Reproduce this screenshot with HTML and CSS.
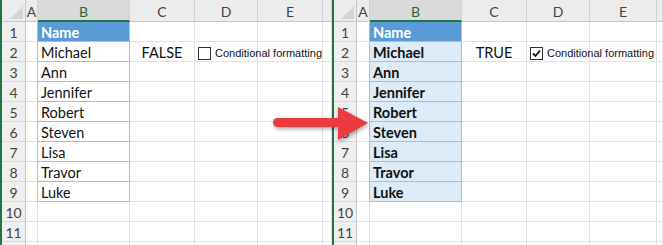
FILE: index.html
```html
<!DOCTYPE html>
<html lang="en">
<head>
    <meta charset="UTF-8">
    <title>Conditional formatting</title>
    <link rel="stylesheet" href="styles.css">
</head>
<body>

    <div class="panel">
        <div class="sheet">
            <div class="corner"></div><div class="ch">A</div><div class="ch sel">B</div><div class="ch">C</div><div class="ch">D</div><div class="ch">E</div><div class="ch"></div>
            <div class="rh">1</div><div class="c pre"></div><div class="c n nh">Name</div><div class="c"></div><div class="c"></div><div class="c"></div><div class="c"></div>
            <div class="rh">2</div><div class="c pre"></div><div class="c n">Michael</div><div class="c mid">FALSE</div><div class="c"></div><div class="c"></div><div class="c"></div>
            <div class="rh">3</div><div class="c pre"></div><div class="c n">Ann</div><div class="c"></div><div class="c"></div><div class="c"></div><div class="c"></div>
            <div class="rh">4</div><div class="c pre"></div><div class="c n">Jennifer</div><div class="c"></div><div class="c"></div><div class="c"></div><div class="c"></div>
            <div class="rh">5</div><div class="c pre"></div><div class="c n">Robert</div><div class="c"></div><div class="c"></div><div class="c"></div><div class="c"></div>
            <div class="rh">6</div><div class="c pre"></div><div class="c n">Steven</div><div class="c"></div><div class="c"></div><div class="c"></div><div class="c"></div>
            <div class="rh">7</div><div class="c pre"></div><div class="c n">Lisa</div><div class="c"></div><div class="c"></div><div class="c"></div><div class="c"></div>
            <div class="rh">8</div><div class="c pre"></div><div class="c n">Travor</div><div class="c"></div><div class="c"></div><div class="c"></div><div class="c"></div>
            <div class="rh">9</div><div class="c pre"></div><div class="c n">Luke</div><div class="c"></div><div class="c"></div><div class="c"></div><div class="c"></div>
            <div class="rh">10</div><div class="c"></div><div class="c"></div><div class="c"></div><div class="c"></div><div class="c"></div><div class="c"></div>
            <div class="rh">11</div><div class="c"></div><div class="c"></div><div class="c"></div><div class="c"></div><div class="c"></div><div class="c"></div>
            <div class="rh"></div><div class="c"></div><div class="c"></div><div class="c"></div><div class="c"></div><div class="c"></div><div class="c"></div>
        </div>
        <label class="check"><span class="box"></span>Conditional formatting</label>
    </div>

    <div class="panel right">
        <div class="sheet">
            <div class="corner"></div><div class="ch">A</div><div class="ch sel">B</div><div class="ch">C</div><div class="ch">D</div><div class="ch">E</div><div class="ch"></div>
            <div class="rh">1</div><div class="c pre"></div><div class="c n nh">Name</div><div class="c"></div><div class="c"></div><div class="c"></div><div class="c"></div>
            <div class="rh">2</div><div class="c pre"></div><div class="c n on">Michael</div><div class="c mid">TRUE</div><div class="c"></div><div class="c"></div><div class="c"></div>
            <div class="rh">3</div><div class="c pre"></div><div class="c n on">Ann</div><div class="c"></div><div class="c"></div><div class="c"></div><div class="c"></div>
            <div class="rh">4</div><div class="c pre"></div><div class="c n on">Jennifer</div><div class="c"></div><div class="c"></div><div class="c"></div><div class="c"></div>
            <div class="rh">5</div><div class="c pre"></div><div class="c n on">Robert</div><div class="c"></div><div class="c"></div><div class="c"></div><div class="c"></div>
            <div class="rh">6</div><div class="c pre"></div><div class="c n on">Steven</div><div class="c"></div><div class="c"></div><div class="c"></div><div class="c"></div>
            <div class="rh">7</div><div class="c pre"></div><div class="c n on">Lisa</div><div class="c"></div><div class="c"></div><div class="c"></div><div class="c"></div>
            <div class="rh">8</div><div class="c pre"></div><div class="c n on">Travor</div><div class="c"></div><div class="c"></div><div class="c"></div><div class="c"></div>
            <div class="rh">9</div><div class="c pre"></div><div class="c n on">Luke</div><div class="c"></div><div class="c"></div><div class="c"></div><div class="c"></div>
            <div class="rh">10</div><div class="c"></div><div class="c"></div><div class="c"></div><div class="c"></div><div class="c"></div><div class="c"></div>
            <div class="rh">11</div><div class="c"></div><div class="c"></div><div class="c"></div><div class="c"></div><div class="c"></div><div class="c"></div>
            <div class="rh"></div><div class="c"></div><div class="c"></div><div class="c"></div><div class="c"></div><div class="c"></div><div class="c"></div>
        </div>
        <label class="check"><span class="box"><svg viewBox="0 0 11 11" width="11" height="11"><path d="M2 5.5 L4.5 8 L9 2.5" fill="none" stroke="#111" stroke-width="1.8"/></svg></span>Conditional formatting</label>
    </div>

    <svg class="arrow" width="110" height="50" viewBox="0 0 110 50">
        <rect x="8" y="18" width="70" height="9" rx="4.5" fill="#eb3b3f"/>
        <polygon points="73,7 103,23 73,40" fill="#eb3b3f"/>
    </svg>

</body>
</html>
```

FILE: styles.css
```css
* {
    margin: 0;
    padding: 0;
    box-sizing: border-box;
}
body {
    display: flex;
    width: 663px;
    height: 245px;
    overflow: hidden;
    background: white;
    font-family: Lato, "Liberation Sans", sans-serif;
    font-size: 14.5px;
    color: #111;
    position: relative;
}
.panel {
    position: relative;
    width: 332px;
    border-left: 2px solid #217346;
    overflow: hidden;
}
.panel.right {
    width: 331px;
}
.sheet {
    display: grid;
    grid-template-columns: 24px 12px 92px 65px 63px 65px 1fr;
    grid-template-rows: 22px repeat(12, 20px);
}
.right .sheet {
    grid-template-columns: 23px 13px 92px 65px 63px 67px 1fr;
}
.corner {
    background: #ececec;
    border-right: 1px solid #c6c6c6;
    border-bottom: 1px solid #c6c6c6;
    position: relative;
}
.corner::after {
    content: "";
    position: absolute;
    right: 2px;
    bottom: 2px;
    border-left: 13px solid transparent;
    border-bottom: 13px solid #d4d4d4;
}
.ch {
    background: #ececec;
    border-right: 1px solid #d2d2d2;
    border-bottom: 1px solid #c6c6c6;
    color: #444;
    font-size: 14px;
    text-align: center;
    line-height: 24px;
    overflow: hidden;
}
.ch.sel {
    background: #dadada;
    color: #1f6b41;
    border-bottom: 2px solid #217346;
}
.rh {
    background: #efefef;
    border-right: 1px solid #c6c6c6;
    border-bottom: 1px solid #dadada;
    color: #444;
    font-size: 14px;
    text-align: center;
    line-height: 22px;
    overflow: hidden;
}
.c {
    border-right: 1px solid #e1e1e1;
    border-bottom: 1px solid #e1e1e1;
    padding: 2px 0 0 3px;
    line-height: 18px;
    white-space: nowrap;
}
.c.pre {
    border-right-color: #9bc2e6;
}
.c.n {
    border-right-color: #9bc2e6;
    border-bottom-color: #9bc2e6;
}
.c.nh {
    background: #5b9bd5;
    color: white;
    font-weight: bold;
}
.c.on {
    background: #ddebf7;
    font-weight: bold;
}
.c.mid {
    text-align: center;
    padding-left: 0;
}
.check {
    position: absolute;
    top: 47px;
    left: 196px;
    display: flex;
    align-items: center;
    gap: 4px;
    font-family: "Liberation Sans", Arial, sans-serif;
    font-size: 11px;
    line-height: 13px;
    color: #111;
    white-space: nowrap;
}
.box {
    width: 13px;
    height: 13px;
    border: 1px solid #333;
    background: white;
    display: flex;
    align-items: center;
    justify-content: center;
}
.arrow {
    position: absolute;
    left: 265px;
    top: 100px;
    filter: drop-shadow(1px 2px 2px rgba(0, 0, 0, 0.35));
}
```
